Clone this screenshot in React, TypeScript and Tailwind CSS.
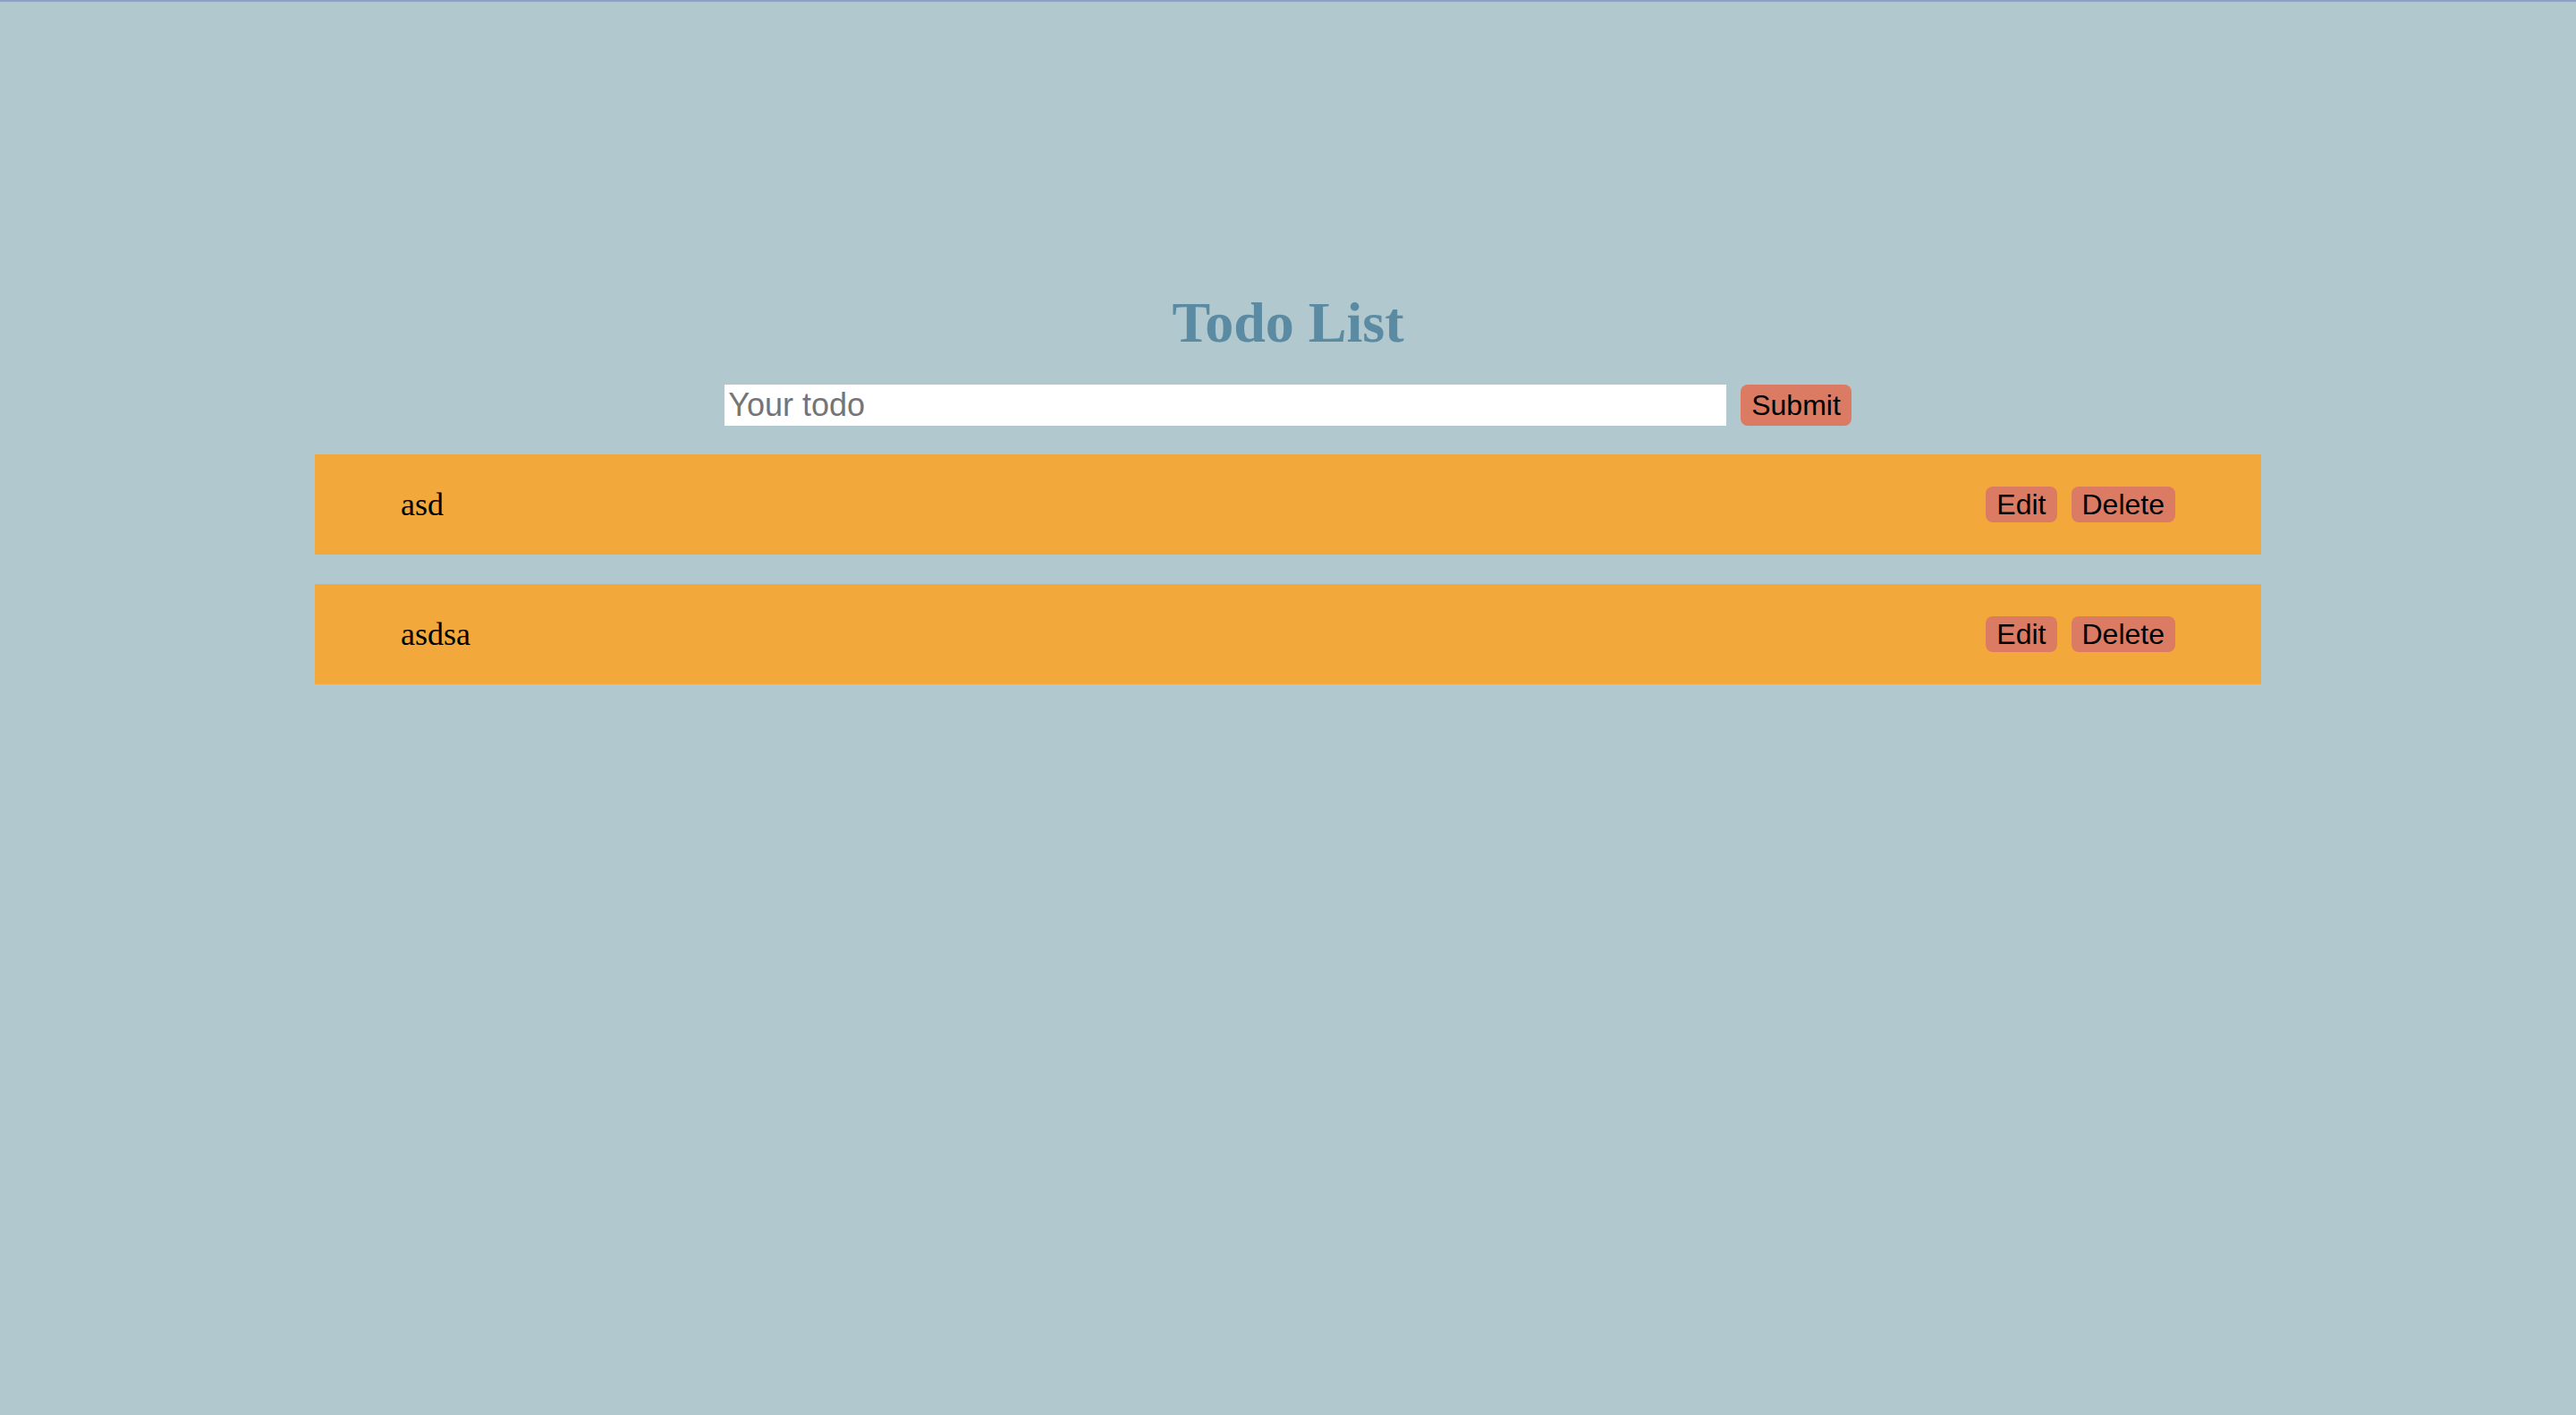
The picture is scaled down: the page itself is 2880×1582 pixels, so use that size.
import React from "react";

const todos = ["asd", "asdsa"];

export default function App() {
  return (
    <div className="min-h-[1582px] w-full bg-[#b0c8ce]">
      <div className="h-[2px] w-full bg-[#8aa0ca]" />
      <div className="pt-[322px]">
        <h1 className="text-center text-[64px] font-bold leading-[73px] text-[#5a8ba2] [font-family:'Liberation_Serif',serif]">
          Todo List
        </h1>
        <form
          className="mt-[33px] flex h-[46px] items-stretch justify-center gap-[16px] [font-family:'Liberation_Sans',Arial,sans-serif]"
          onSubmit={(e) => e.preventDefault()}
        >
          <input
            className="h-[46px] w-[1120px] bg-white px-[4px] text-[36px] leading-[46px] text-black outline-none placeholder:text-[#757575]"
            placeholder="Your todo"
          />
          <button
            type="submit"
            className="h-[46px] rounded-[8px] bg-[#dc7b63] px-[12px] text-[32px] leading-[46px] text-black"
          >
            Submit
          </button>
        </form>
        <div className="mx-auto mt-[32px] flex w-[2176px] flex-col gap-[33px]">
          {todos.map((t) => (
            <div
              key={t}
              className="flex h-[112px] items-center justify-between bg-[#f2a83b] px-[96px]"
            >
              <span className="text-[36px] leading-[41px] text-black [font-family:'Liberation_Serif',serif]">
                {t}
              </span>
              <div className="flex gap-[16px] [font-family:'Liberation_Sans',Arial,sans-serif]">
                <button className="h-[40px] rounded-[8px] bg-[#dc7b63] px-[12px] text-[32px] leading-[40px] text-black">
                  Edit
                </button>
                <button className="h-[40px] rounded-[8px] bg-[#dc7b63] px-[12px] text-[32px] leading-[40px] text-black">
                  Delete
                </button>
              </div>
            </div>
          ))}
        </div>
      </div>
    </div>
  );
}
